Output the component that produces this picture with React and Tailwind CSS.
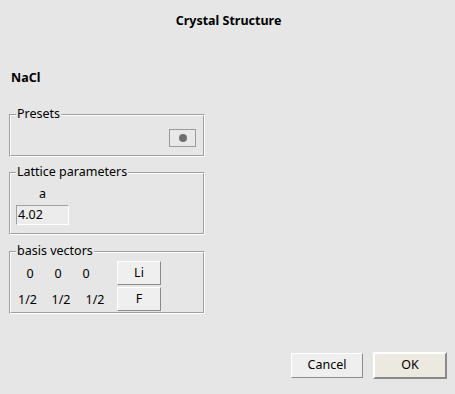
export default function App() {
  const groove = "border border-t-[#a0a0a0] border-l-[#a0a0a0] border-b-white border-r-white";
  const grooveInner = "border border-t-white border-l-white border-b-[#a0a0a0] border-r-[#a0a0a0]";
  const btn = "bg-[#efefef] border border-t-white border-l-white border-b-[#8a8a8a] border-r-[#8a8a8a] flex items-center justify-center";
  const Frame = ({ label, className, children }) => (
    <div className={`relative w-[196px] ${groove} ${className}`}>
      <div className={`h-full w-full ${grooveInner}`}>{children}</div>
      <span className="absolute left-[6px] top-[-9px] bg-[#e6e6e6] px-[1px] leading-[16px]">{label}</span>
    </div>
  );
  return (
    <div
      className="w-[455px] h-[394px] bg-[#e6e6e6] flex flex-col text-[12.5px] text-black overflow-hidden"
      style={{ fontFamily: '"Noto Sans", sans-serif' }}
    >
      <div className="h-[42px] flex items-center justify-center pl-[2px] font-bold text-[12.5px]">
        Crystal Structure
      </div>
      <div className="mt-[28px] ml-[11px] h-[16px] leading-[16px] font-bold text-[12.5px]">NaCl</div>
      <div className="ml-[9px] mt-[28px] flex flex-col">
        <Frame label="Presets" className="h-[43px]">
          <div className="flex justify-end pr-[7px] pt-[13px]">
            <div className="w-[27px] h-[18px] border border-[#9a9a9a] bg-[#e8e8e8] flex items-center justify-center">
              <div className="w-[8px] h-[8px] rounded-full bg-[#6e6e6e]" />
            </div>
          </div>
        </Frame>
        <Frame label="Lattice parameters" className="h-[63px] mt-[15px]">
          <div className="flex flex-col items-start pl-[5px] pt-[12px]">
            <div className="w-[53px] text-center leading-[16px] h-[17px]">a</div>
            <div className="mt-[2px] w-[53px] h-[20px] border border-t-[#a0a0a0] border-l-[#a0a0a0] border-b-white border-r-white bg-[#ececec] leading-[18px] pl-[1px]">
              4.02
            </div>
          </div>
        </Frame>
        <Frame label="basis vectors" className="h-[63px] mt-[16px]">
          <div className="flex pt-[8px]">
            <div className="flex flex-col w-[106px]">
              <div className="flex h-[26px] items-center pl-[5px]">
                <span className="w-[28px] text-center">0</span>
                <span className="w-[28px] text-center">0</span>
                <span className="w-[28px] text-center">0</span>
              </div>
              <div className="flex h-[26px] items-center">
                <span className="w-[33px] text-center">1/2</span>
                <span className="w-[34px] text-center">1/2</span>
                <span className="w-[34px] text-center">1/2</span>
              </div>
            </div>
            <div className="flex flex-col gap-[2px]">
              <div className={`w-[44px] h-[24px] ${btn}`}>Li</div>
              <div className={`w-[44px] h-[24px] ${btn}`}>F</div>
            </div>
          </div>
        </Frame>
      </div>
      <div className="mt-auto mb-[15px] flex justify-end items-center gap-[10px] pr-[8px]">
        <div className={`w-[72px] h-[25px] ${btn}`}>Cancel</div>
        <div className="w-[74px] h-[27px] bg-[#ece9e0] border-2 border-t-white border-l-white border-b-[#8a8a8a] border-r-[#8a8a8a] flex items-center justify-center">OK</div>
      </div>
    </div>
  );
}
